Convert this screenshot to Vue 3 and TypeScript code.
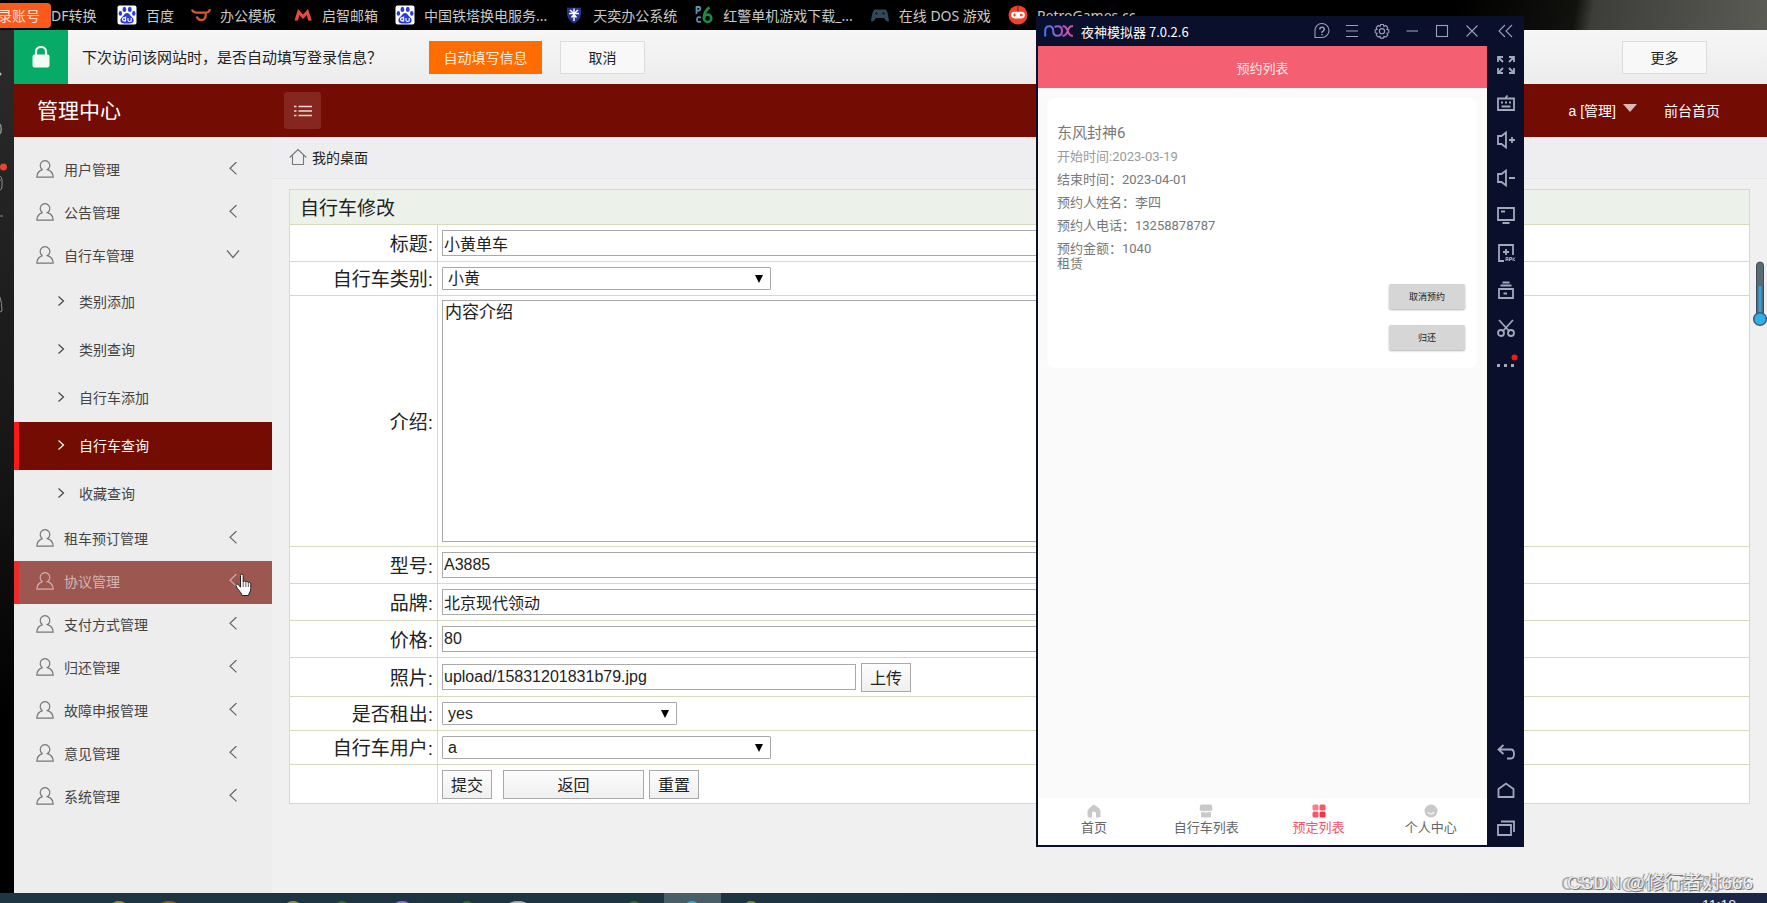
<script setup lang="ts">
import { ref } from 'vue'

interface Bookmark { text: string; icon: string }
interface MenuEntry { text: string; open?: boolean; hover?: boolean; children?: { text: string; active?: boolean }[] }

const bookmarks: Bookmark[] = [
  { text: '百度', icon: 'paw' },
  { text: '办公模板', icon: 'bull' },
  { text: '启智邮箱', icon: 'mail' },
  { text: '中国铁塔换电服务...', icon: 'paw' },
  { text: '天奕办公系统', icon: 'shield' },
  { text: '红警单机游戏下载_...', icon: 'p6' },
  { text: '在线 DOS 游戏', icon: 'pad' },
  { text: 'RetroGames.cc -', icon: 'retro' },
]

const menu: MenuEntry[] = [
  { text: '用户管理' },
  { text: '公告管理' },
  {
    text: '自行车管理',
    open: true,
    children: [
      { text: '类别添加' },
      { text: '类别查询' },
      { text: '自行车添加' },
      { text: '自行车查询', active: true },
      { text: '收藏查询' },
    ],
  },
  { text: '租车预订管理' },
  { text: '协议管理', hover: true },
  { text: '支付方式管理' },
  { text: '归还管理' },
  { text: '故障申报管理' },
  { text: '意见管理' },
  { text: '系统管理' },
]

const form = ref({
  title: '小黄单车',
  kind: '小黄',
  intro: '内容介绍',
  model: 'A3885',
  brand: '北京现代领动',
  price: '80',
  photo: 'upload/15831201831b79.jpg',
  rented: 'yes',
  user: 'a',
})

const details = [
  { text: '结束时间：2023-04-01' },
  { text: '预约人姓名：李四' },
  { text: '预约人电话：13258878787' },
  { text: '预约金额：1040' },
]

const tabs = [
  { text: '首页', icon: 'home' },
  { text: '自行车列表', icon: 'shop' },
  { text: '预定列表', icon: 'grid', active: true },
  { text: '个人中心', icon: 'face' },
]

const taskIcons = [
  { x: 112, w: 14, c: '#b08a12' },
  { x: 160, w: 18, c: '#9a5a10' },
  { x: 286, w: 14, c: '#a8892c' },
  { x: 336, w: 12, c: '#3c6b20' },
  { x: 394, w: 16, c: '#8a6fd8' },
  { x: 461, w: 12, c: '#2c6b20' },
  { x: 508, w: 20, c: '#a9b0b4' },
  { x: 628, w: 12, c: '#3c6b20' },
  { x: 686, w: 12, c: '#25b6cf' },
  { x: 745, w: 12, c: '#7d8b30' },
]
</script>

<template>
  <div class="desktop">
    <nav class="bookmarks">
      <span class="account">录账号</span>
      <a href="#" class="first">DF转换</a>
      <a v-for="b in bookmarks" :key="b.text" href="#" class="bm">
        <svg v-if="b.icon === 'paw'" viewBox="0 0 20 20" width="20" height="20">
          <rect x=".5" y=".5" width="19" height="19" rx="2" fill="#fff" />
          <g fill="#2a3cdc">
            <ellipse cx="7.4" cy="4.4" rx="1.9" ry="2.6" />
            <ellipse cx="12.8" cy="4.4" rx="1.9" ry="2.6" />
            <ellipse cx="3.4" cy="8.4" rx="1.7" ry="2.4" />
            <ellipse cx="16.8" cy="8.4" rx="1.7" ry="2.4" />
            <path d="M10 8c-2 0-2.6 1.700-4 3.200C4.400 12.800 3 13.800 3.400 16c.4 2.200 2.400 2.600 6.600 2.600s6.200-.4 6.600-2.600c.4-2.200-1-3.200-2.600-4.800C12.600 9.700 12 8 10 8z" />
          </g>
          <path d="M8.600 11.500v5M8.600 14.800a1.600 1.600 0 1 0-3 0a1.600 1.600 0 0 0 3 0M11 13v2.500q1.500 2 3.200 0V13v3.500" fill="none" stroke="#fff" stroke-width="1.100" />
        </svg>
        <svg v-else-if="b.icon === 'bull'" viewBox="0 0 20 20" width="20" height="20" fill="none" stroke="#d9552c" stroke-width="2.200">
          <path d="M1 4.500q1 3.200 5 3.200h8q4.500 0 5-3.500M5.500 11.500q2 4.200 6 3.500q3.500-1 3.300-7" />
        </svg>
        <svg v-else-if="b.icon === 'mail'" viewBox="0 0 20 20" width="20" height="20" fill="#ea4a3c">
          <path d="M1.500 15.500L5 4l5 5.500L15 4l3.800 11.500h-3.600l-1.400-5.500L10 14 6.200 10l-1.100 5.500z" />
        </svg>
        <svg v-else-if="b.icon === 'shield'" viewBox="0 0 20 20" width="20" height="20">
          <path d="M3 2.500q7 .5 14 0V9q-.5 6-7 9.500Q3.500 15 3 9z" fill="#28348e" />
          <path d="M10 3.500V16M5 8.500h10M6 5l4 3.500L14 5M7.500 12.500l2.500-3 2.500 3" stroke="#fff" stroke-width="1.400" fill="none" />
        </svg>
        <svg v-else-if="b.icon === 'p6'" viewBox="0 0 20 20" width="20" height="20" fill="none">
          <path d="M2.500 9V2h3q2 2-.5 3.700H2.500M7 12.500q-4-1.500-4 2t4 2" stroke="#5b93b4" stroke-width="1.800" />
          <path d="M15.500 2.500Q10 6 10 13" stroke="#1f8a44" stroke-width="2.800" />
          <circle cx="13.600" cy="13.300" r="3.700" stroke="#1f8a44" stroke-width="2.600" />
        </svg>
        <svg v-else-if="b.icon === 'pad'" viewBox="0 0 20 20" width="20" height="20">
          <path d="M5 4.500h10q2 0 3 5.500t1 6q-2.500 1.500-5-3H6q-2.500 4.500-5 3Q1 15 2 10t3-5.500z" fill="#2f4a5c" />
          <path d="M5 8.500h3M6.500 7v3" stroke="#11202a" /><circle cx="13.500" cy="8.500" r="1.300" fill="#11202a" />
        </svg>
        <svg v-else viewBox="0 0 20 20" width="20" height="20">
          <circle cx="10" cy="10" r="9.500" fill="#f2402a" />
          <rect x="3.200" y="6.800" width="13.600" height="6.600" rx="3.300" fill="#fff" />
          <path d="M5 10h3.200M6.600 8.500v3" stroke="#f2402a" stroke-width="1.200" /><circle cx="13.300" cy="10.100" r="1.400" fill="#f2402a" />
          <path d="M10 .5v6" stroke="#7c1a10" />
        </svg>
        <span>{{ b.text }}</span>
      </a>
    </nav>

    <div class="stage">
      <aside class="dock">
        <svg viewBox="0 0 14 300" width="14" height="300" fill="none" stroke="#8d8d8d">
          <circle cx="0" cy="44" r="1.500" fill="#bbb" stroke="none" />
          <path d="M0 94q2.500 5 0 10" stroke-width="1.500" />
          <path d="M0 146q2 1 2 4v6q0 4-2 4M0 150h1" />
          <circle cx="3.500" cy="137" r="3.500" fill="#e8452f" stroke="none" />
          <path d="M0 186h3" /><path d="M0 267q2 6 2 14l-2 1" />
        </svg>
      </aside>

      <div class="browser">
        <div class="infobar">
          <span class="lock">
            <svg viewBox="0 0 18 22" width="18" height="22">
              <path d="M4 9V5.500a5 4.500 0 0 1 10 0V9" fill="none" stroke="#f2fbf6" stroke-width="2.200" />
              <rect x=".5" y="8.500" width="17" height="13" rx="2" fill="#f2fbf6" />
            </svg>
          </span>
          <p>下次访问该网站时，是否自动填写登录信息？</p>
          <button class="fill">自动填写信息</button>
          <button class="plain">取消</button>
          <button class="plain more">更多</button>
        </div>

        <header class="top">
          <h1>管理中心</h1>
          <button class="toggle" aria-label="折叠菜单">
            <svg viewBox="0 0 18 14" width="18" height="14" stroke="#f0dcda" stroke-width="1.500">
              <path d="M4.500 2.500H18M4.500 7H18M4.500 11.500H18M0 2.500h2.500M0 7h2.500M0 11.500h2.500" />
            </svg>
          </button>
          <div class="user">
            <a href="#">a [管理]<svg viewBox="0 0 14 8" width="14" height="8"><path d="M0 0h14L7 8z" fill="#dcb9b6" /></svg></a>
            <a href="#">前台首页</a>
          </div>
        </header>

        <div class="body">
          <nav class="side">
            <template v-for="m in menu" :key="m.text">
              <a href="#" class="item" :class="{ hover: m.hover }">
                <svg viewBox="0 0 18 18" width="18" height="18" fill="none" stroke="currentColor" stroke-width="1.200">
                  <path d="M6.600 9.600A4.800 4.800 0 1 1 11.400 9.600C15 10.800 17.200 13.400 17.200 17.200H.8C.8 13.400 3 10.800 6.600 9.600" />
                </svg>
                <span>{{ m.text }}</span>
                <svg v-if="m.open" class="arrow" viewBox="0 0 14 14" width="14" height="14" fill="none" stroke="currentColor" stroke-width="1.200"><path d="M1 2.500l6 7 6-7" /></svg>
                <svg v-else class="arrow" viewBox="0 0 14 14" width="14" height="14" fill="none" stroke="currentColor" stroke-width="1.200"><path d="M10.500 0L4 6.200l6.500 6.200" /></svg>
              </a>
              <a v-for="c in m.children" :key="c.text" href="#" class="sub" :class="{ active: c.active }">
                <svg viewBox="0 0 8 10" width="8" height="10" fill="none" stroke="currentColor" stroke-width="1.200"><path d="M1.500.5L6.500 5l-5 4.500" /></svg>
                <span>{{ c.text }}</span>
              </a>
            </template>
          </nav>

          <main class="content">
            <div class="crumb">
              <svg viewBox="0 0 18 18" width="18" height="18" fill="none" stroke="#777" stroke-width="1.100"><path d="M.7 9.500L9 1.500l8.300 8M3.500 7.500v9h11v-9" /></svg>
              <span>我的桌面</span>
            </div>

            <form class="formwrap" @submit.prevent>
              <table>
                <colgroup><col class="names"><col></colgroup>
                <tbody>
                  <tr><th colspan="2" class="caption">自行车修改</th></tr>
                  <tr><th><label for="title">标题:</label></th><td><input id="title" v-model="form.title" type="text" class="wide"></td></tr>
                  <tr class="low">
                    <th><label for="kind">自行车类别:</label></th>
                    <td><div class="sel long"><select id="kind" v-model="form.kind"><option>小黄</option></select><svg viewBox="0 0 8 8" width="8" height="8"><path d="M0 0h8L4 8z" /></svg></div></td>
                  </tr>
                  <tr class="tall"><th><label for="intro">介绍:</label></th><td><textarea id="intro" v-model="form.intro" class="wide"></textarea></td></tr>
                  <tr><th><label for="model">型号:</label></th><td><input id="model" v-model="form.model" type="text" class="wide"></td></tr>
                  <tr><th><label for="brand">品牌:</label></th><td><input id="brand" v-model="form.brand" type="text" class="wide"></td></tr>
                  <tr><th><label for="price">价格:</label></th><td><input id="price" v-model="form.price" type="text" class="wide"></td></tr>
                  <tr class="roomy"><th><label for="photo">照片:</label></th><td><div class="line"><input id="photo" v-model="form.photo" type="text" class="photo"><button type="button">上传</button></div></td></tr>
                  <tr class="low">
                    <th><label for="rented">是否租出:</label></th>
                    <td><div class="sel short"><select id="rented" v-model="form.rented"><option>yes</option></select><svg viewBox="0 0 8 8" width="8" height="8"><path d="M0 0h8L4 8z" /></svg></div></td>
                  </tr>
                  <tr class="low">
                    <th><label for="user">自行车用户:</label></th>
                    <td><div class="sel long"><select id="user" v-model="form.user"><option>a</option></select><svg viewBox="0 0 8 8" width="8" height="8"><path d="M0 0h8L4 8z" /></svg></div></td>
                  </tr>
                  <tr class="roomy"><th></th><td><div class="line"><button type="submit">提交</button><button type="button" class="back">返回</button><button type="reset">重置</button></div></td></tr>
                </tbody>
              </table>
            </form>
          </main>
        </div>
      </div>
    </div>

    <footer class="taskbar">
      <span class="task-on"></span>
      <svg class="peeks" width="800" height="10" viewBox="0 0 800 10">
        <ellipse v-for="t in taskIcons" :key="t.x" :cx="t.x + t.w / 2" cy="12" :rx="t.w / 2" ry="4" :fill="t.c" />
      </svg>
      <span class="clock">11:18</span>
    </footer>

    <section class="emu">
      <div class="emu-bar">
        <svg class="nox" viewBox="0 0 30 12" width="30" height="12" fill="none" stroke-width="2">
          <defs><linearGradient id="noxg" gradientUnits="userSpaceOnUse" x1="0" x2="30" y1="0" y2="0"><stop offset="0" stop-color="#3a7bf0" /><stop offset=".5" stop-color="#9a5bd0" /><stop offset="1" stop-color="#f04a90" /></linearGradient></defs>
          <path stroke="url(#noxg)" d="M1.200 11.500V6q0-4.800 4-4.800T9.200 6q0 4.800 4.400 4.800T18 6q0-4.800-4.400-4.800-2 0-3 1M18.500 1.200h1q2.500 0 4.200 4.800t4.200 4.800h1M29 1.200h-1.200q-2.500 0-4.200 4.800t-4.200 4.800h-1" />
        </svg>
        <span class="name">夜神模拟器 7.0.2.6</span>
        <svg class="tools" viewBox="0 0 210 16" width="210" height="16" fill="none" stroke="#9aa0b5" stroke-width="1.100">
          <path d="M2 15V8a7 7 0 1 1 7 6.500H2" /><path d="M6.800 6.500q0-2.200 2.200-2.200t2.200 2-2.200 2.700v1M9 11v1.200" stroke-width="1.500" />
          <path d="M33 2.500h12M33 8h12M33 13.500h12" />
          <path d="M67.600 1.500h2.800l.6 1.900 1.800-.9 2 2-.9 1.800 1.900.6v2.800l-1.900.6.9 1.800-2 2-1.800-.9-.6 1.900h-2.800l-.6-1.900-1.800.9-2-2 .9-1.800-1.900-.6V6.900l1.900-.6-.9-1.800 2-2 1.800.9z" /><circle cx="69" cy="8.200" r="2.600" />
          <path d="M93.500 8h11.500" /><rect x="123.500" y="2.500" width="11" height="11" /><path d="M153.500 2.500l11 11M164.500 2.500l-11 11" />
          <path d="M192 2l-6 6 6 6M199 2l-6 6 6 6" />
        </svg>
      </div>
      <div class="emu-main">
        <div class="screen">
          <div class="app-head">预约列表</div>
          <div class="card">
            <h2>东风封神6</h2>
            <p class="soft">开始时间:2023-03-19</p>
            <p v-for="d in details" :key="d.text">{{ d.text }}</p>
            <p class="tail">租赁</p>
            <div class="acts"><button>取消预约</button><button>归还</button></div>
          </div>
          <nav class="tabs">
            <a v-for="t in tabs" :key="t.text" href="#" :class="{ on: t.active }">
              <svg viewBox="0 0 14 14" width="14" height="14" fill="#c9c9c9">
                <path v-if="t.icon === 'home'" d="M7 .5Q13.500 4.500 13.500 7.500v4q0 2-1.500 2H9V9.500a2 2 0 0 0-4 0v4H2q-1.500 0-1.500-2v-4Q.5 4.500 7 .5z" />
                <path v-else-if="t.icon === 'shop'" d="M2.500.5h9q1.500 0 1.500 1.500l.5 3.500q-1 2-2.500 1.200-1 1-2 0-1 1-2 0-1 1-2 0-1 1-2 0-1.500 .8-2.500-1.200L1 2Q1 .5 2.500.5zM2 8q1 .5 2.500 0 2.500 1 5 0 1.500 .5 2.500 0v4q0 1.500-1.500 1.500h-7Q2 13.500 2 12z" />
                <g v-else-if="t.icon === 'grid'"><rect x=".5" y=".5" width="6" height="6" rx="1.500" fill="#fb7d8b" /><rect x="7.500" y=".5" width="6" height="6" rx="1.500" fill="#f9566a" /><rect x=".5" y="7.500" width="6" height="6" rx="1.500" fill="#f9566a" /><rect x="7.500" y="7.500" width="6" height="6" rx="1.500" fill="#f5334c" /></g>
                <g v-else><circle cx="7" cy="7" r="6.500" /><path d="M3.800 8q3.200 4 6.400 0" fill="none" stroke="#fff" stroke-width="1.200" /></g>
              </svg>
              <span>{{ t.text }}</span>
            </a>
          </nav>
        </div>
        <div class="rail">
          <div class="rail-top">
            <svg viewBox="0 0 18 18"><path d="M1 6V1h5M1 1l5 5M12 1h5v5M17 1l-5 5M1 12v5h5M1 17l5-5M17 12v5h-5M17 17l-5-5" /></svg>
            <svg viewBox="0 0 18 18"><path d="M1 4.500h16v11.500H1zM4 8.500h2M8 8.500h2M12 8.500h2M4.500 12.500h9M8 4.500L10.500 1.500" /></svg>
            <svg viewBox="0 0 18 18"><path d="M1 5h3.500L9 1.500v15L4.500 13H1zM12 9h6M15 6v6" /></svg>
            <svg viewBox="0 0 18 18"><path d="M1 5h3.500L9 1.500v15L4.500 13H1zM12 9h6" /></svg>
            <svg viewBox="0 0 18 18"><path d="M1 2h16v12H1zM4 5.500h4M5.500 17h7" /></svg>
            <svg viewBox="0 0 18 18"><path d="M7 17H2V1h14v10M9 5v6M6 8h6" /><path d="M9 17v-3.500h2V17M9 15.500h2M12.500 17v-3.500h2v2h-2M16 13.500V17M18 13.500L16.500 15.200 18 17" stroke-width="1" /></svg>
            <svg viewBox="0 0 18 18"><path d="M2 8h14v9H2zM6.500 12.500H10M3.500 4.500h11M5.500 1.500h7" /></svg>
            <svg viewBox="0 0 18 18"><path d="M2 1l10.500 11.500M16 1L5.500 12.500" /><circle cx="4" cy="14" r="3" /><circle cx="14" cy="14" r="3" /></svg>
            <svg viewBox="0 0 18 18"><path d="M0 9.500h3M7 9.500h3M14 9.500h3" stroke-width="3" /><circle cx="17.500" cy="1.500" r="3" fill="#f61b12" stroke="none" /></svg>
          </div>
          <div class="rail-nav">
            <svg viewBox="0 0 18 18"><path d="M6.500 2L1.500 6.500l5 4.500M1.500 6.500H14q3 0 3 4.500t-3 4.500H10" /></svg>
            <svg viewBox="0 0 18 18"><path d="M1.500 16V8L9 2.500 16.500 8v8z" /></svg>
            <svg viewBox="0 0 18 18"><path d="M1 6h13v10H1zM4 2.500h13V13" /></svg>
          </div>
        </div>
      </div>
    </section>

    <svg class="thermo" viewBox="0 0 14 66" width="14" height="66">
      <rect x="3.500" y="1" width="7" height="56" rx="3.500" fill="#5b6a73" stroke="#3f4a52" />
      <rect x="5.500" y="25" width="3" height="34" fill="#2f9fe0" />
      <circle cx="7" cy="58" r="6.300" fill="#2db1ec" stroke="#4c5c66" stroke-width="1.500" />
    </svg>

    <svg class="cursor" viewBox="0 0 18 24" width="18" height="24">
      <path d="M5.500 2.500q0-1.500 1.300-1.500t1.400 1.500V9q.2-1 1.300-1t1.300 1.200q.3-.8 1.300-.7t1.200 1.200q.4-.6 1.300-.4 1.200.2 1.200 1.700v4.500q0 2.500-1.500 4.500l-.8 2.500H7.200Q6 19.500 4 17.500t-3-5q-.3-1.200.8-1.500t2 1.200l1.700 2z" fill="#fff" stroke="#222" />
      <path d="M8.200 9v5M10.800 9.500V14M13.300 10v4" stroke="#333" stroke-width=".8" />
    </svg>

    <span class="mark">CSDN @修行者对666</span>
  </div>
</template>

<style>
body { margin: 0; overflow: hidden; }
</style>

<style scoped>
.desktop {
  position: relative;
  display: flex;
  flex-direction: column;
  height: 100vh;
  overflow: hidden;
  font-family: "Liberation Sans", "Noto Sans CJK SC", sans-serif;
  font-size: 14px;
  color: #222;
}
a { color: inherit; text-decoration: none; }
button, input, select, textarea { font-family: inherit; box-sizing: border-box; margin: 0; }
h1, h2, p { margin: 0; font-weight: 400; }
svg { flex: none; display: block; }

.bookmarks {
  display: flex;
  align-items: center;
  height: 30px;
  box-sizing: border-box;
  flex: none;
  background: linear-gradient(100deg, #000 82%, #11110e 89%, #3d3e39 90%, #5a5b55 100%);
  color: #c9c9c9;
  font-family: "Noto Sans", "Noto Sans CJK SC", sans-serif;
  white-space: nowrap;
  overflow: hidden;
}
.account {
  width: 51px;
  box-sizing: border-box;
  height: 25px;
  border-radius: 0 4px 4px 0;
  background: #fb5a1c;
  color: #ffe0cf;
  line-height: 25px;
  display: flex;
  justify-content: flex-end;
  padding-right: 11px;
  overflow: hidden;
}
.first { width: 66px; flex: none; }
.bm { display: flex; align-items: center; gap: 9px; margin-right: 17px; }

.stage { flex: 1; display: flex; min-height: 0; }
.dock { width: 14px; flex: none; background: linear-gradient(#2b2b2b, #161616 50%, #000 80%); }
.browser { flex: 1; min-width: 0; display: flex; flex-direction: column; background: #f0f0f0; }

.infobar {
  display: flex;
  align-items: center;
  height: 54px;
  flex: none;
  background: linear-gradient(#f6f6f6, #ececec);
}
.lock { width: 54px; height: 54px; background: #07ab67; display: flex; align-items: center; justify-content: center; }
.infobar p { font-size: 15px; margin-left: 14px; width: 347px; padding-bottom: 2px; white-space: nowrap; }
.infobar button { height: 33px; font-size: 14px; padding: 0; }
.fill { width: 113px; border: 0; background: #ff6c00; color: #fff0e0; }
.plain { width: 85px; border: 1px solid #dcdcdc; background: #f8f8f8; color: #222; margin-left: 18px; }
.more { margin-left: auto; margin-right: 60px; }

.top { display: flex; align-items: center; height: 53px; flex: none; background: #730c02; color: #fff; }
.top h1 { font-size: 21px; width: 247px; padding-left: 23px; padding-bottom: 4px; }
.toggle {
  width: 37px; height: 37px; border: 0; border-radius: 3px; padding: 0;
  background: #85271f; display: flex; align-items: center; justify-content: center;
}
.user { margin-left: auto; margin-right: 47px; display: flex; gap: 27px; padding-bottom: 2px; }
.user a { display: flex; gap: 7px; }
.user svg { margin-top: 4px; }

.body { flex: 1; display: flex; min-height: 0; }
.side { width: 258px; flex: none; background: #ededed; padding-top: 12px; box-sizing: border-box; color: #444; }
.item, .sub { display: flex; align-items: center; box-sizing: border-box; padding-bottom: 3px; }
.item { height: 43px; padding-left: 22px; padding-right: 32px; gap: 10px; }
.item > svg:first-child { color: #777; }
.arrow { margin-left: auto; color: #666; }
.sub { height: 48px; padding-left: 43px; gap: 14px; }
.item.hover, .sub.active { box-shadow: inset 5px 0 0 #f91a18; }
.item.hover { background: #9c5850; color: #d3b5b1; box-shadow: inset 5px 0 0 #ea2c2a; }
.item.hover svg { color: #cfaeaa; }
.sub.active { background: #730c02; color: #fff; }

.content { flex: 1; min-width: 0; }
.crumb {
  display: flex; align-items: center; gap: 5px; height: 42px; box-sizing: border-box;
  padding-left: 17px; padding-bottom: 2px; background: #eeeef0; border-bottom: 1px solid #e6e6e6;
}
.formwrap { padding: 10px 17px 0; }
table { width: 100%; border-collapse: collapse; background: #fff; table-layout: fixed; }
.names { width: 148px; }
th, td { border: 1px solid #d6dbbd; padding: 0 4px; height: 36px; font-weight: 400; box-sizing: content-box; }
th { text-align: right; font-size: 19px; line-height: 28px; padding-top: 3px; height: 33px; }
td { line-height: 0; }
.caption { text-align: left; background: #ecf2e9; padding-left: 10px; height: 31px; }
.tall td { height: 250px; }
.roomy td { height: 38px; }
.low td { height: 33px; }
.low th { height: 30px; }
input, textarea, select { border: 1px solid #a9a9a9; background: #fff; color: #222; font-size: 16px; padding: 0 1px; border-radius: 0; }
input { height: 26px; line-height: 24px; }
.wide { width: 720px; }
textarea { height: 242px; resize: none; font-size: 17px; line-height: 20px; padding: 0 2px; font-family: "Noto Sans CJK SC", sans-serif; display: block; }
.photo { width: 414px; }
.sel { display: grid; align-items: center; }
.sel > * { grid-area: 1 / 1; }
.sel svg { justify-self: end; margin-right: 8px; pointer-events: none; }
select { appearance: none; height: 23px; width: 100%; padding: 0 5px; line-height: 21px; border-radius: 1px; }
.long { width: 329px; }
.short { width: 235px; }
.line { display: flex; align-items: center; gap: 5px; }
.line button { width: 50px; height: 29px; padding: 0; font-size: 16px; border: 1px solid #a9a9a9; background: linear-gradient(#fdfdfd, #efefef); color: #222; }
.line .back { width: 141px; margin-left: 6px; }

.taskbar { position: relative; height: 10px; flex: none; background: linear-gradient(90deg, #1f3541, #1d3340 50%, #1a2644); overflow: hidden; }
.task-on { position: absolute; left: 664px; top: 0; width: 57px; height: 10px; background: #4a5e68; }
.peeks { position: absolute; left: 0; top: 0; }
.clock { position: absolute; right: 31px; top: 4px; font-size: 14px; line-height: 16px; color: #e8e8ee; }

.emu {
  position: absolute; left: 1036px; top: 16px; width: 488px; height: 831px;
  display: flex; flex-direction: column; background: #0a0f2c; font-family: Roboto, "Noto Sans CJK SC", sans-serif;
}
.emu-bar { height: 30px; flex: none; display: flex; align-items: center; padding-left: 8px; }
.name { color: #fff; margin-left: 7px; font-size: 13px; font-family: "Noto Sans CJK SC", sans-serif; }
.tools { margin-left: auto; margin-right: 1px; }
.emu-main { flex: 1; display: flex; min-height: 0; padding: 0 0 2px 2px; }
.screen { flex: 1; display: flex; flex-direction: column; background: #fafafa; color: #777; font-size: 13px; }
.app-head { height: 42px; flex: none; background: #f55f72; color: #ffe9ec; display: flex; align-items: center; justify-content: center; }
.card { margin: 10px 10px 0 9px; padding: 23px 12px 18px 10px; background: #fff; border-radius: 8px; }
.card h2 { font-size: 15px; line-height: 24px; }
.card p { line-height: 23px; }
.card .soft { color: #9a9a9a; }
.card .tail { line-height: 8px; }
.acts { display: flex; flex-direction: column; align-items: flex-end; gap: 16px; margin-top: 16px; }
.acts button { width: 76px; height: 25px; padding: 0; border: 0; border-radius: 2px; background: #d5d6d5; color: #222; font-size: 9px; box-shadow: 0 1px 2px rgba(0, 0, 0, .3); }
.tabs { margin-top: auto; height: 47px; background: #fff; display: flex; }
.tabs a { flex: 1; display: flex; flex-direction: column; align-items: center; padding-top: 6px; gap: 1px; color: #666; line-height: 18px; }
.tabs a.on { color: #f2566b; }
.rail { width: 37px; flex: none; display: flex; flex-direction: column; align-items: center; justify-content: space-between; padding: 10px 0 8px; box-sizing: border-box; }
.rail-top, .rail-nav { display: flex; flex-direction: column; justify-content: space-between; }
.rail-top { height: 318px; }
.rail-nav { height: 94px; }
.rail svg { width: 18px; height: 18px; fill: none; stroke: #a3a8ba; stroke-width: 1.800; overflow: visible; }

.thermo { position: absolute; right: 0; top: 261px; }
.cursor { position: absolute; left: 235px; top: 573px; }
.mark {
  position: absolute; right: 14px; bottom: 6px; font-size: 19px; line-height: 28px; color: #ececec; white-space: nowrap;
  text-shadow: 1px 1px 0 #777, -1px 0 0 #aaa, -6px 1px 0 #aaa;
}
</style>
